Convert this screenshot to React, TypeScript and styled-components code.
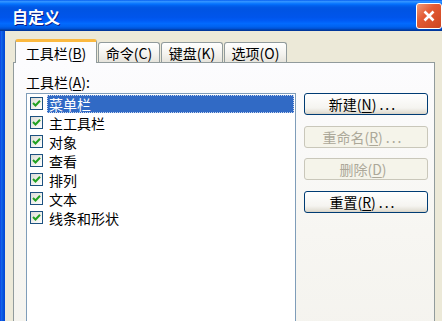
import React from "react";
import styled, { createGlobalStyle } from "styled-components";

const Global = createGlobalStyle`
  html, body { margin: 0; padding: 0; background: #ECE9D8; overflow: hidden; }
  body { font-family: "Noto Sans CJK SC", "Liberation Sans", sans-serif; }
  * { box-sizing: border-box; }
`;

const Window = styled.div`
  width: 442px;
  height: 321px;
  display: flex;
  flex-direction: column;
  overflow: hidden;
  background: #ECE9D8;
`;

const TitleBar = styled.div`
  height: 31px;
  flex: none;
  display: flex;
  align-items: center;
  padding: 0 0 0 12px;
  background: linear-gradient(
    to bottom,
    #0058ee 0%,
    #3593ff 4%,
    #288eff 7%,
    #127dff 10%,
    #036ffc 14%,
    #0262ee 18%,
    #0057e5 24%,
    #0054e3 30%,
    #0055eb 56%,
    #005bf5 66%,
    #026afe 76%,
    #0062ef 86%,
    #0052d6 92%,
    #0040ab 96%,
    #003092 100%
  );
`;

const Title = styled.span`
  flex: 1;
  color: #ffffff;
  font-weight: bold;
  font-size: 16px;
  line-height: 20px;
  text-shadow: 1px 1px 0 #0a1e8a;
`;

const CloseButton = styled.div`
  flex: none;
  width: 26px;
  height: 26px;
  border: 1px solid #ffffff;
  border-radius: 3px;
  background-color: #de5530;
  background-image: linear-gradient(135deg, #f09a78 0%, #e35b34 40%, #cc4420 100%);
  display: flex;
  align-items: center;
  justify-content: center;
`;

const Body = styled.div`
  flex: 1;
  display: flex;
  min-height: 0;
`;

const LeftFrame = styled.div`
  width: 5px;
  flex: none;
  background: linear-gradient(to right, #0831d9 0, #166aee 1px, #0855dd 3px, #0046d5 5px);
`;

const Content = styled.div`
  flex: 1;
  display: flex;
  flex-direction: column;
  padding: 8px 0 0 8px;
  min-height: 0;
`;

const TabStrip = styled.div`
  height: 24px;
  flex: none;
  display: flex;
  align-items: flex-end;
  gap: 1px;
  padding-left: 2px;
  margin-bottom: -1px;
  position: relative;
  z-index: 1;
`;

const Tab = styled.div<{ $active?: boolean; $w: number }>`
  width: ${(p) => p.$w}px;
  height: ${(p) => (p.$active ? 24 : 20)}px;
  margin-bottom: ${(p) => (p.$active ? 0 : 1)}px;
  border: 1px solid #919b9c;
  border-bottom: none;
  border-radius: 3px 3px 0 0;
  background: ${(p) =>
    p.$active ? "#fcfcfe" : "linear-gradient(to bottom, #ffffff, #f3f2ee 60%, #e6e4dc)"};
  ${(p) => (p.$active ? "border-top: 3px solid #fbb940;" : "")}
  display: flex;
  align-items: center;
  justify-content: center;
  font-size: 14px;
  line-height: 16px;
  color: #000;
  white-space: nowrap;
  padding-top: ${(p) => (p.$active ? 0 : 1)}px;
`;

const Panel = styled.div`
  width: 422px;
  flex: 1;
  border: 1px solid #919b9c;
  border-bottom: none;
  background: linear-gradient(to bottom, #fcfcfe 0%, #f7f6f2 60%, #f4f3ee 100%);
  padding: 11px 6px 0 12px;
  display: flex;
  flex-direction: column;
`;

const Label = styled.div`
  font-size: 14px;
  line-height: 16px;
  height: 16px;
  margin-bottom: 3px;
  color: #000;
`;

const Mnemonic = styled.u`
  text-decoration: underline;
  text-underline-offset: 2px;
`;

const MainRow = styled.div`
  display: flex;
  gap: 8px;
  align-items: flex-start;
`;

const ListBox = styled.div`
  width: 270px;
  height: 250px;
  flex: none;
  border: 1px solid #7f9db9;
  background: #ffffff;
  display: flex;
  flex-direction: column;
`;

const Row = styled.div`
  height: 19px;
  display: flex;
  align-items: center;
  padding-left: 3px;
`;

const CheckBox = styled.div`
  width: 13px;
  height: 13px;
  flex: none;
  border: 1px solid #1c5180;
  background: linear-gradient(135deg, #dcdcd7 0%, #f2f2ee 60%, #ffffff 100%);
  display: flex;
  align-items: center;
  justify-content: center;
`;

const ItemText = styled.div<{ $selected?: boolean }>`
  margin-left: 4px;
  margin-right: 1px;
  height: 18px;
  padding: 0 2px;
  font-size: 14px;
  line-height: 18px;
  color: ${(p) => (p.$selected ? "#ffffff" : "#000000")};
  background: ${(p) => (p.$selected ? "#316ac5" : "transparent")};
  ${(p) => (p.$selected ? "flex: 1; outline: 1px dotted #c7d5ee; outline-offset: -1px;" : "")}
`;

const ButtonColumn = styled.div`
  width: 124px;
  display: flex;
  flex-direction: column;
  gap: 10.5px;
`;

const Button = styled.div<{ $disabled?: boolean }>`
  height: 22px;
  border: 1px solid ${(p) => (p.$disabled ? "#c9c7ba" : "#003c74")};
  border-radius: 3px;
  background: ${(p) =>
    p.$disabled
      ? "#f5f4ea"
      : "linear-gradient(to bottom, #ffffff 0%, #f5f4f0 70%, #e3e0d6 92%, #d6d0c5 100%)"};
  color: ${(p) => (p.$disabled ? "#aca899" : "#000000")};
  font-size: 14px;
  line-height: 18px;
  display: flex;
  align-items: center;
  justify-content: center;
  padding-right: 6px;
  white-space: nowrap;
`;

const Dots = styled.span`
  letter-spacing: 2px;
  margin-left: 3px;
`;

const Check = () => (
  <svg width="9" height="9" viewBox="0 0 9 9">
    <path d="M1 4 L3.5 6.5 L8 1.8" fill="none" stroke="#21a121" strokeWidth="2" />
  </svg>
);

const items = ["菜单栏", "主工具栏", "对象", "查看", "排列", "文本", "线条和形状"];

export default function App() {
  return (
    <>
      <Global />
      <Window>
        <TitleBar>
          <Title>自定义</Title>
          <CloseButton>
            <svg width="14" height="14" viewBox="0 0 14 14">
              <path d="M2.5 2.5 L11.5 11.5 M11.5 2.5 L2.5 11.5" stroke="#ffffff" strokeWidth="2.6" />
            </svg>
          </CloseButton>
        </TitleBar>
        <Body>
          <LeftFrame />
          <Content>
            <TabStrip>
              <Tab $active $w={82}>
                工具栏(<Mnemonic>B</Mnemonic>)
              </Tab>
              <Tab $w={62}>命令(C)</Tab>
              <Tab $w={62}>键盘(K)</Tab>
              <Tab $w={63}>选项(O)</Tab>
            </TabStrip>
            <Panel>
              <Label>
                工具栏(<Mnemonic>A</Mnemonic>):
              </Label>
              <MainRow>
                <ListBox>
                  {items.map((t, i) => (
                    <Row key={t}>
                      <CheckBox>
                        <Check />
                      </CheckBox>
                      <ItemText $selected={i === 0}>{t}</ItemText>
                    </Row>
                  ))}
                </ListBox>
                <ButtonColumn>
                  <Button>
                    新建(<Mnemonic>N</Mnemonic>)<Dots>...</Dots>
                  </Button>
                  <Button $disabled>
                    重命名(<Mnemonic>R</Mnemonic>)<Dots>...</Dots>
                  </Button>
                  <Button $disabled>
                    删除(<Mnemonic>D</Mnemonic>)
                  </Button>
                  <Button>
                    重置(<Mnemonic>R</Mnemonic>)<Dots>...</Dots>
                  </Button>
                </ButtonColumn>
              </MainRow>
            </Panel>
          </Content>
        </Body>
      </Window>
    </>
  );
}
